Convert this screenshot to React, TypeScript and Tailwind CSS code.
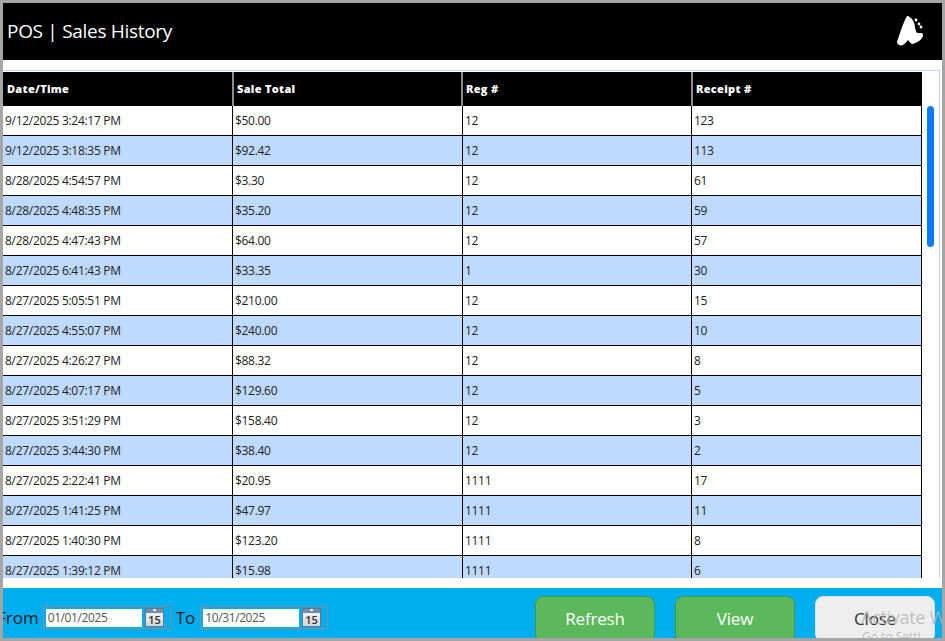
const rows = [
  ["9/12/2025 3:24:17 PM", "$50.00", "12", "123"],
  ["9/12/2025 3:18:35 PM", "$92.42", "12", "113"],
  ["8/28/2025 4:54:57 PM", "$3.30", "12", "61"],
  ["8/28/2025 4:48:35 PM", "$35.20", "12", "59"],
  ["8/28/2025 4:47:43 PM", "$64.00", "12", "57"],
  ["8/27/2025 6:41:43 PM", "$33.35", "1", "30"],
  ["8/27/2025 5:05:51 PM", "$210.00", "12", "15"],
  ["8/27/2025 4:55:07 PM", "$240.00", "12", "10"],
  ["8/27/2025 4:26:27 PM", "$88.32", "12", "8"],
  ["8/27/2025 4:07:17 PM", "$129.60", "12", "5"],
  ["8/27/2025 3:51:29 PM", "$158.40", "12", "3"],
  ["8/27/2025 3:44:30 PM", "$38.40", "12", "2"],
  ["8/27/2025 2:22:41 PM", "$20.95", "1111", "17"],
  ["8/27/2025 1:41:25 PM", "$47.97", "1111", "11"],
  ["8/27/2025 1:40:30 PM", "$123.20", "1111", "8"],
  ["8/27/2025 1:39:12 PM", "$15.98", "1111", "6"],
]

const headers = ["Date/Time", "Sale Total", "Reg #", "Receipt #"]

function CalendarIcon({ id }: { id: string }) {
  return (
    <svg width="19" height="19" viewBox="0 0 19 19" className="shrink-0">
      <defs>
        <linearGradient id={id} x1="0" y1="0" x2="0" y2="1">
          <stop offset="0" stopColor="#fafafa" />
          <stop offset="1" stopColor="#d4d4d4" />
        </linearGradient>
      </defs>
      <rect x="0.5" y="0.5" width="18" height="18" fill={`url(#${id})`} stroke="#6f7680" />
      <rect x="1" y="1" width="17" height="4" fill="#6a90b8" />
      <rect x="8" y="1" width="3" height="2" fill="#e4edf5" />
      <text x="9.5" y="16" textAnchor="middle" fontSize="11" fontWeight="600" fill="#333" fontFamily="Open Sans, sans-serif">
        15
      </text>
    </svg>
  )
}

function DateField({ id, value }: { id: string; value: string }) {
  return (
    <div className="flex h-[23px] w-[128px] items-center border border-[#7f8e99] pl-[2px] pr-[6px]">
      <div className="h-[18px] w-[96px] bg-white pl-[2px] text-[12px] leading-[17px] tracking-[-0.4px] text-[#555]">{value}</div>
      <div className="ml-[3px]">
        <CalendarIcon id={id} />
      </div>
    </div>
  )
}

export default function App() {
  return (
    <div className="relative flex h-[641px] w-[945px] flex-col overflow-hidden border-[3px] border-[#a6a6a6] bg-white font-['Open_Sans',sans-serif]">
      <header className="flex h-[57px] shrink-0 items-center justify-between bg-black pl-1 pr-[16px] text-white">
        <h1 className="text-[19px] leading-none tracking-[-0.3px]">POS | Sales History</h1>
        <svg width="30" height="32" viewBox="0 0 30 32" className="mt-[-2px]">
          <path
            d="M11 1 C13 1 15 3 16 4 C18 7 19 10 19 13 C20 15 20 17 21 18 L26 18 C27 19 27 20 27 21 C26 23 25 25 23 26 C21 27 18 29 16 29 C14 28 13 26 12 25 C10 27 9 29 7 30 C5 31 2 30 1 28 C1 26 3 21 4 18 C6 12 8 6 11 1 Z"
            fill="#fff"
          />
          <circle cx="20" cy="5" r="1.4" fill="#fff" />
          <circle cx="23" cy="9" r="1.4" fill="#fff" />
          <circle cx="25" cy="12" r="1.4" fill="#fff" />
        </svg>
      </header>

      <div className="h-[10px] shrink-0 bg-white" />

      <main className="mr-[2px] flex min-h-0 flex-1 border-r border-t border-[#c3d8f2]">
        <div className="flex w-[919px] shrink-0 flex-col overflow-hidden pt-px">
          <div className="grid h-[34px] shrink-0 grid-cols-[231px_229px_230px_229px] bg-black text-[11px] font-extrabold tracking-[0.3px] text-white">
            {headers.map((h) => (
              <div key={h} className="flex items-center border-r-2 border-[#8c8c8c] pl-[3px] first:pl-1 last:border-r-0">
                {h}
              </div>
            ))}
          </div>
          {rows.map((row, i) => (
            <div
              key={row[0]}
              className={`grid h-[30px] shrink-0 grid-cols-[230px_230px_229px_230px] border-b border-black text-[12px] leading-[28px] tracking-[-0.3px] text-[#222] ${
                i % 2 ? "bg-[#bfdaff]" : "bg-white"
              }`}
            >
              {row.map((cell, j) => (
                <div key={j} className="border-r border-black pl-[2px] pt-px">
                  {cell}
                </div>
              ))}
            </div>
          ))}
        </div>
        <div className="flex-1 pl-[5px] pt-[35px]">
          <div className="h-[141px] w-[7px] rounded-full bg-[#0a7cff]" />
        </div>
      </main>

      <div className="h-[10px] shrink-0 bg-white" />

      <footer className="flex h-[50px] shrink-0 items-start bg-[#00aeef]">
        <div className="mt-[18px] flex items-center">
          <span className="ml-[-6px] mr-[4px] text-[17px] leading-[23px] text-[#1b1b1b]">From</span>
          <DateField id="cal-from" value="01/01/2025" />
          <span className="mx-[5px] text-[17px] leading-[23px] text-[#1b1b1b]">To</span>
          <DateField id="cal-to" value="10/31/2025" />
        </div>
        <div className="ml-auto mr-[7px] flex items-center gap-5 pt-[8px]">
          <button className="h-[46px] w-[120px] rounded-lg border border-[#3f9f47] bg-[#5cb85c] text-[17px] tracking-[-0.2px] text-white">
            Refresh
          </button>
          <button className="h-[46px] w-[120px] rounded-lg border border-[#3f9f47] bg-[#5cb85c] text-[17px] tracking-[-0.2px] text-white">
            View
          </button>
          <button className="h-[46px] w-[120px] rounded-lg border border-[#cfe3f0] bg-[#eeeeee] text-[17px] tracking-[-0.2px] text-[#333]">
            Close
          </button>
        </div>
      </footer>

      <div className="pointer-events-none absolute left-[858px] top-[602px] whitespace-nowrap text-[18px] leading-6 tracking-[-0.3px] text-[#b4b4b4]/80">
        Activate W
      </div>
      <div className="pointer-events-none absolute left-[859px] top-[626px] whitespace-nowrap text-[12px] leading-4 text-[#c0c0c0]">
        Go to Setti
      </div>
    </div>
  )
}
